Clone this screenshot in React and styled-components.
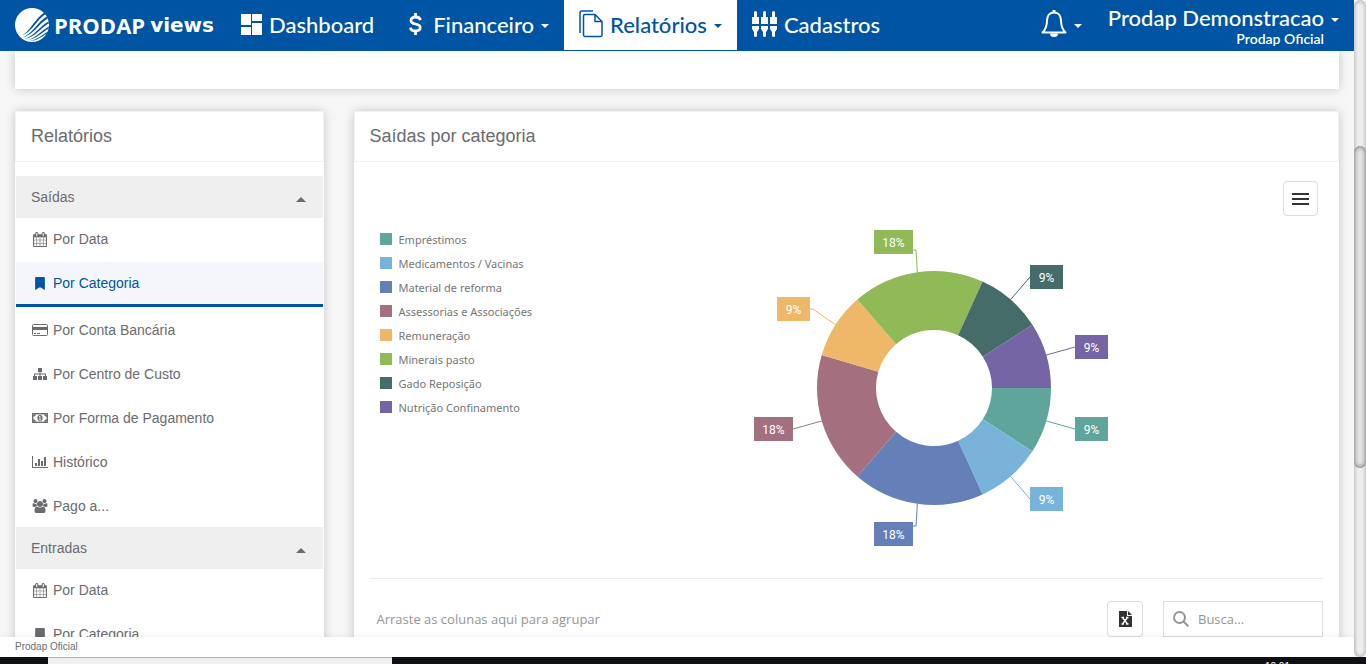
import styled, { createGlobalStyle } from "styled-components";
import { FaBookmark } from "react-icons/fa";

const EstiloGlobal = createGlobalStyle`
    * { box-sizing: border-box; }

    body {
        margin: 0;
        background: #F7F7F7;
        color: #6A6C6F;
        font-family: "Liberation Sans", Arial, sans-serif;
        font-size: 14px;
        overflow: hidden;
    }

    ul, h1, h2, h3, p { margin: 0; padding: 0; }
    ul { list-style: none; }
    a { color: inherit; text-decoration: none; }
    button, input { font-family: inherit; }
`;

const Janela = styled.div`
    display: flex;
    flex-direction: column;
    height: 100vh;
`;

const Aplicacao = styled.div`
    display: flex;
    flex: 1;
    min-height: 0;
`;

const Pagina = styled.div`
    display: flex;
    flex-direction: column;
    flex: 1;
    min-width: 0;
`;

const Cabecalho = styled.header`
    display: flex;
    align-items: flex-start;
    flex: none;
    height: 51px;
    padding-left: 15px;
    background: #0054A4;
    border-bottom: 1px solid #0054A4;
    color: #FFF;
    font-family: Lato, "Open Sans", sans-serif;
`;

const Marca = styled.a`
    display: flex;
    align-items: center;
    gap: 5px;
    height: 50px;
    width: 211px;
`;

const MarcaNome = styled.span`
    font-family: "Open Sans", sans-serif;
    font-weight: 700;
    font-size: 22px;
`;

const MarcaProduto = styled.span`
    font-family: "DejaVu Sans", sans-serif;
    font-weight: 700;
    font-size: 20px;
`;

const Menu = styled.nav`
    display: flex;
    flex: 1;
`;

const MenuItem = styled.a`
    display: flex;
    align-items: center;
    gap: 7px;
    height: 50px;
    padding: 0 15px 2px;
    font-size: 22px;
    font-weight: 500;
    white-space: nowrap;
    color: ${({ $ativo }) => ($ativo ? "#0054A4" : "#FFF")};
    background: ${({ $ativo }) => ($ativo ? "#FFF" : "transparent")};
`;

const Seta = styled.span`
    flex: none;
    margin-top: 4px;
    border: 4px solid transparent;
    border-bottom-width: 0;
    border-top-color: currentColor;
`;

const SetaGrupo = styled.span`
    flex: none;
    margin-top: 4px;
    border: 5px solid transparent;
    border-top-width: 0;
    border-bottom-color: currentColor;
`;

const Notificacoes = styled.button`
    display: flex;
    align-items: center;
    gap: 7px;
    height: 50px;
    padding: 0 0 2px;
    border: 0;
    background: none;
    color: #FFF;
`;

const Usuario = styled.button`
    display: grid;
    grid-template-columns: auto 8px;
    align-items: center;
    column-gap: 7px;
    margin: 0 15px 0 26px;
    padding: 6px 0 0;
    border: 0;
    background: none;
    color: #FFF;
    text-align: right;
`;

const UsuarioNome = styled.span`
    font-size: 22px;
    font-weight: 500;
    line-height: 24px;
`;

const UsuarioEmpresa = styled.span`
    font-size: 14px;
    font-weight: 600;
    line-height: 18px;
`;

const Conteudo = styled.main`
    flex: 1;
    min-height: 0;
    overflow: hidden;
`;

const Painel = styled.section`
    background: #FFF;
    box-shadow: 0 0 10px rgba(0, 0, 0, 0.2);
`;

const PainelFiltro = styled(Painel)`
    height: 38px;
    margin: 0 15px 22px;
`;

const Colunas = styled.div`
    display: flex;
`;

const ColunaLateral = styled.aside`
    width: 25%;
    padding: 0 15px;
`;

const ColunaPrincipal = styled.div`
    width: 75%;
    padding: 0 15px;
`;

const PainelTitulo = styled.h2`
    height: 51px;
    padding: 0 15px;
    border: 1px solid #F2F2F2;
    font-size: 18px;
    font-weight: 400;
    line-height: 49px;
`;

const Grupos = styled.div`
    padding: 14px 1px 0;
`;

const GrupoTitulo = styled.h3`
    display: flex;
    align-items: center;
    justify-content: space-between;
    height: 42px;
    padding: 0 17px 0 15px;
    background: #EFEFEF;
    font-size: 14px;
    font-weight: 400;
`;

const Lista = styled.ul`
    display: flex;
    flex-direction: column;
    gap: 2px;
`;

const Link = styled.a`
    display: flex;
    align-items: center;
    gap: 5px;
    box-sizing: content-box;
    height: 42px;
    padding: 0 16px;
    color: ${({ $ativo }) => ($ativo ? "#0054A4" : "inherit")};
    background: ${({ $ativo }) => ($ativo ? "#F4F6FB" : "transparent")};
    border-bottom: ${({ $ativo }) => ($ativo ? "3px solid #0054A4" : "0")};

    svg {
        flex: none;
        width: 16px;
    }
`;

const Corpo = styled.div`
    padding: 19px 16px 0;
`;

const Acoes = styled.div`
    display: flex;
    justify-content: flex-end;
    padding-right: 5px;
`;

const Botao = styled.button`
    display: flex;
    align-items: center;
    justify-content: center;
    width: ${({ $lado }) => $lado}px;
    height: ${({ $lado }) => $lado}px;
    padding: 0;
    border: 1px solid #DDD;
    border-radius: 4px;
    background: #FFF;
    color: #333;
`;

const GraficoArea = styled.div`
    display: flex;
    padding-bottom: 18px;
    border-bottom: 1px solid #EBEBEB;
    font-family: "Noto Sans", "Open Sans", sans-serif;
`;

const Legenda = styled.ul`
    flex: none;
    width: 175px;
    padding: 11px 0 0 10px;
`;

const LegendaItem = styled.li`
    display: flex;
    align-items: center;
    gap: 7px;
    height: 24px;
    font-size: 11px;
    color: #767676;
    white-space: nowrap;
`;

const LegendaCor = styled.span`
    width: 12px;
    height: 12px;
    background: ${({ $cor }) => $cor};
`;

const Rosca = styled.div`
    display: flex;
    flex: 1;
    justify-content: center;
`;

const Rotulo = styled.text`
    fill: #FFF;
    font-family: Roboto, sans-serif;
    font-size: 12px;
    text-anchor: middle;
`;

const Ferramentas = styled.div`
    display: flex;
    align-items: center;
    gap: 20px;
    padding: 22px 0 24px 7px;
    color: #959595;
    font-family: "Open Sans", "Noto Sans", sans-serif;
`;

const Dica = styled.p`
    flex: 1;
    font-size: 13px;
`;

const Busca = styled.label`
    display: flex;
    align-items: center;
    gap: 9px;
    width: 160px;
    height: 36px;
    padding: 0 9px;
    border: 1px solid #DDD;
`;

const BuscaCampo = styled.input`
    flex: 1;
    min-width: 0;
    padding: 0;
    border: 0;
    outline: 0;
    font-size: 13px;

    &::placeholder {
        color: #959595;
    }
`;

const Rodape = styled.footer`
    flex: none;
    height: 20px;
    padding-left: 15px;
    background: #FFF;
    box-shadow: 0 0 6px rgba(0, 0, 0, 0.08);
    font-size: 10px;
    line-height: 19px;
    z-index: 1;
`;

const Rolagem = styled.div`
    flex: none;
    width: 12px;
    padding-top: 146px;
    border-radius: 6px;
    background: #EEE;
    box-shadow: inset 0 0 4px rgba(0, 0, 0, 0.35);
`;

const RolagemMarcador = styled.div`
    height: 322px;
    border-radius: 6px;
    background: #E4E4E4;
    box-shadow: inset 0 0 5px rgba(0, 0, 0, 0.6);
`;

const BarraTarefas = styled.div`
    display: flex;
    justify-content: space-between;
    flex: none;
    height: 7px;
    padding: 0 76px 0 48px;
    overflow: hidden;
    background: #101118;
    color: #FFF;
`;

const BarraBusca = styled.div`
    width: 344px;
    height: 7px;
    background: #F1F1F1;
    border-top: 1px solid #B8B8B8;
`;

const Relogio = styled.time`
    padding-top: 4px;
    font-size: 10px;
    line-height: 12px;
`;

const IconeLogo = () => (
    <svg width="34" height="34" viewBox="0 0 34 34" aria-hidden="true">
        <circle cx="17" cy="17" r="17" fill="#FFF" />
        <g fill="#0054A4">
            <path d="M5 28C15 25 19 11 29.500 4.500L30.800 6C21 12 17 25 5 28z" />
            <path d="M7 29.500C18 26 22 14 32 8.500L33 10.200C23 16 19 27 7 29.500z" />
            <path d="M9 31C20 28 24 18.500 33.500 13.500L34 15.200C25 20 21 29 9 31z" />
            <path d="M11 32.200C22 30 26 22.500 34 18.500L33.700 20.400C27 24 22 31 11 32.200z" />
            <path d="M13.500 33.300C22 32 27 27 33 23.500L32.300 25.300C27 28.500 22 33 13.500 33.300z" />
        </g>
    </svg>
);

const IconePainel = () => (
    <svg width="21" height="21" viewBox="0 0 21 21" fill="currentColor" aria-hidden="true">
        <path d="M0 0h10v11H0zM0 13h10v8H0zM11 0h10v7H11zM11 9h10v12H11z" />
    </svg>
);

const IconeCifrao = () => (
    <svg width="22" height="22" viewBox="-5 0 22 22" fill="none" stroke="currentColor" strokeWidth="2.800" aria-hidden="true">
        <path d="M6.500 0v4M6.500 18v4M11.300 7.200C11 5 9 4 6.500 4S2 5.200 2 7.500s2 3 4.500 3.500 4.700 1.300 4.700 3.600S9 18 6.500 18 1.800 17 1.500 14.600" />
    </svg>
);

const IconePaginas = () => (
    <svg width="24" height="28" viewBox="0 0 24 28" fill="none" stroke="currentColor" strokeWidth="1.500" aria-hidden="true">
        <path d="M14 1H3a2 2 0 0 0-2 2v20" />
        <path d="M16 4.500H6a1.500 1.500 0 0 0-1.500 1.500v19A1.500 1.500 0 0 0 6 26.500h15.500a1.500 1.500 0 0 0 1.500-1.500V11.500zM16 4.500v7h7" />
    </svg>
);

const IconeCerca = () => (
    <svg width="25" height="26" viewBox="0 0 25 26" fill="currentColor" aria-hidden="true">
        {[0, 9, 18].map(x => (
            <path key={x} d={`M${x + 2} 1.500a1.500 1.500 0 0 1 3 0V6h2v7H${x}V6h2zM${x} 15h7v3l-2 3v3.500a1.500 1.500 0 0 1-3 0V21l-2-3z`} />
        ))}
    </svg>
);

const IconeSino = () => (
    <svg width="26" height="28" viewBox="0 0 26 28" fill="none" stroke="currentColor" strokeWidth="2" strokeLinejoin="round" aria-hidden="true">
        <path d="M13 2.500c-5 0-7 4-7 8 0 6-1.500 9-4.500 12h23c-3-3-4.500-6-4.500-12 0-4-2-8-7-8z" />
        <path d="M9 23.500a4 3.500 0 0 0 8 0z" fill="currentColor" stroke="none" />
        <path d="M13 0v2.500" strokeWidth="3" />
    </svg>
);

const IconeCalendario = () => (
    <svg height="15" viewBox="0 0 1792 1792" fill="currentColor" aria-hidden="true">
        <path d="M192 1664h288v-288h-288v288zm352 0h320v-288h-320v288zm-352-352h288v-320h-288v320zm352 0h320v-320h-320v320zm-352-384h288v-288h-288v288zm736 736h320v-288h-320v288zm-384-736h320v-288h-320v288zm768 736h288v-288h-288v288zm-384-352h320v-320h-320v320zm-352-864v-288q0-13-9.500-22.500t-22.500-9.500h-64q-13 0-22.500 9.500t-9.500 22.500v288q0 13 9.500 22.500t22.500 9.500h64q13 0 22.500-9.500t9.500-22.500zm736 864h288v-320h-288v320zm-384-384h320v-288h-320v288zm384 0h288v-288h-288v288zm32-480v-288q0-13-9.500-22.500t-22.500-9.500h-64q-13 0-22.500 9.500t-9.500 22.500v288q0 13 9.500 22.500t22.500 9.500h64q13 0 22.500-9.500t9.500-22.500zm384-64v1280q0 52-38 90t-90 38h-1408q-52 0-90-38t-38-90v-1280q0-52 38-90t90-38h128v-96q0-66 47-113t113-47h64q66 0 113 47t47 113v96h384v-96q0-66 47-113t113-47h64q66 0 113 47t47 113v96h128q52 0 90 38t38 90z" />
    </svg>
);

const IconeCartao = () => (
    <svg height="12" viewBox="0 0 16 12" fill="none" stroke="currentColor" aria-hidden="true">
        <rect x=".5" y=".5" width="15" height="11" rx="1" />
        <path d="M1 4.500h14" strokeWidth="3" />
        <path d="M2 9.500h2M5 9.500h3" />
    </svg>
);

const IconeOrganograma = () => (
    <svg height="12" viewBox="0 0 16 12" fill="currentColor" aria-hidden="true">
        <path d="M6 0h4v4H8.500v1.500H14V8h1v4h-4V8h2V6.500H8.500V8H10v4H6V8h1.500V6.500H3V8h2v4H1V8h1V5.500h5.500V4H6z" />
    </svg>
);

const IconeDinheiro = () => (
    <svg height="10" viewBox="0 0 16 10" fill="none" stroke="currentColor" strokeWidth="1.400" aria-hidden="true">
        <rect x=".7" y=".7" width="14.600" height="8.600" />
        <path d="M1 3a2 2 0 0 0 2-2M13 1a2 2 0 0 0 2 2M1 7a2 2 0 0 1 2 2M13 9a2 2 0 0 1 2-2" />
        <ellipse cx="8" cy="5" rx="2.600" ry="3" fill="currentColor" stroke="none" />
        <path d="M7 4l1-.8v3.500M7 6.700h2" stroke="#FFF" strokeWidth=".8" />
    </svg>
);

const IconeBarras = () => (
    <svg height="12" viewBox="0 0 16 12" fill="currentColor" aria-hidden="true">
        <path d="M0 0h1v11h15v1H0zM3 7h2v3H3zM6 3h2v7H6zM9 5h2v5H9zM12 1h2v9h-2z" />
    </svg>
);

const IconePessoas = () => (
    <svg height="14" viewBox="64 0 1920 1792" fill="currentColor" aria-hidden="true">
        <path d="M657 896q-162 5-265 128h-134q-82 0-138-40.500t-56-118.500q0-353 124-353 6 0 43.500 21t97.500 42.500 119 21.500q67 0 133-23-5 37-5 66 0 139 81 256zm1071 637q0 120-73 189.500t-194 69.500h-874q-121 0-194-69.500t-73-189.500q0-53 3.500-103.500t14-109 26.500-108.500 43-97.500 62-81 85.500-53.500 111.500-20q10 0 43 21.500t73 48 107 48 135 21.500 135-21.500 107-48 73-48 43-21.500q61 0 111.500 20t85.500 53.500 62 81 43 97.500 26.500 108.500 14 109 3.500 103.500zm-1024-1277q0 106-75 181t-181 75-181-75-75-181 75-181 181-75 181 75 75 181zm704 384q0 159-112.500 271.500t-271.500 112.500-271.500-112.500-112.500-271.500 112.500-271.500 271.500-112.500 271.500 112.500 112.500 271.500zm576 225q0 78-56 118.500t-138 40.500h-134q-103-123-265-128 81-117 81-256 0-29-5-66 66 23 133 23 59 0 119-21.500t97.500-42.500 43.500-21q124 0 124 353zm-128-609q0 106-75 181t-181 75-181-75-75-181 75-181 181-75 181 75 75 181z" />
    </svg>
);

const IconeExcel = () => (
    <svg width="13" height="16" viewBox="0 0 13 16" aria-hidden="true">
        <path d="M0 0h8v5h5v11H0zM9 0l4 4H9z" fill="currentColor" />
        <path d="M3.500 6.500l5 6.500M8.500 6.500l-5 6.500M2.500 6.500h2.500M7 6.500h2.500M2.500 13h2.500M7 13h2.500" stroke="#FFF" strokeWidth="1.400" />
    </svg>
);

const IconeLupa = () => (
    <svg width="16" height="16" viewBox="0 0 16 16" fill="none" stroke="currentColor" strokeWidth="2" aria-hidden="true">
        <circle cx="6.500" cy="6.500" r="5.500" />
        <path d="M10.500 10.500l4.800 4.800" />
    </svg>
);

const IconeMenu = () => (
    <svg width="17" height="12" viewBox="0 0 17 12" fill="currentColor" aria-hidden="true">
        <path d="M0 0h17v2H0zM0 5h17v2H0zM0 10h17v2H0z" />
    </svg>
);

const itensSaidas = [
    { nome: "Por Data", icone: <IconeCalendario /> },
    { nome: "Por Categoria", icone: <FaBookmark size={13} />, ativo: true },
    { nome: "Por Conta Bancária", icone: <IconeCartao /> },
    { nome: "Por Centro de Custo", icone: <IconeOrganograma /> },
    { nome: "Por Forma de Pagamento", icone: <IconeDinheiro /> },
    { nome: "Histórico", icone: <IconeBarras /> },
    { nome: "Pago a...", icone: <IconePessoas /> },
];

const itensEntradas = [
    { nome: "Por Data", icone: <IconeCalendario /> },
    { nome: "Por Categoria", icone: <FaBookmark size={13} /> },
];

// x e y: canto da etiqueta em relação ao centro da rosca
const categorias = [
    { nome: "Empréstimos", cor: "#5FA59C", partes: 1, x: 141, y: 29 },
    { nome: "Medicamentos / Vacinas", cor: "#78B4D9", partes: 1, x: 96, y: 99 },
    { nome: "Material de reforma", cor: "#6580B9", partes: 2, x: -60, y: 134 },
    { nome: "Assessorias e Associações", cor: "#A4707F", partes: 2, x: -180, y: 29 },
    { nome: "Remuneração", cor: "#EEB868", partes: 1, x: -157, y: -91 },
    { nome: "Minerais pasto", cor: "#90BA58", partes: 2, x: -60, y: -158 },
    { nome: "Gado Reposição", cor: "#456C68", partes: 1, x: 96, y: -123 },
    { nome: "Nutrição Confinamento", cor: "#7565A4", partes: 1, x: 141, y: -53 },
];

const RAIO = 117;
const RAIO_INTERNO = 58;

function ponto(raio, angulo) {
    return `${(raio * Math.cos(angulo)).toFixed(2)} ${(raio * Math.sin(angulo)).toFixed(2)}`;
}

function GraficoRosca() {
    const total = categorias.reduce((soma, c) => soma + c.partes, 0);
    let inicio = 0;

    return (
        <svg width="380" height="344" viewBox="-190 -172 380 344" role="img" aria-label="Saídas por categoria">
            {categorias.map(({ nome, cor, partes, x, y }) => {
                const fim = inicio + (partes / total) * 2 * Math.PI;
                const meio = (inicio + fim) / 2;
                const fatia = `M${ponto(RAIO, inicio)}A${RAIO} ${RAIO} 0 0 1 ${ponto(RAIO, fim)}L${ponto(RAIO_INTERNO, fim)}A${RAIO_INTERNO} ${RAIO_INTERNO} 0 0 0 ${ponto(RAIO_INTERNO, inicio)}z`;
                const largura = partes > 1 ? 39 : 33;
                const lado = x < 0 ? x + largura : x;
                const altura = Math.abs(y) > 130 ? y + (y < 0 ? 20 : 4) : y + 12;
                const dobra = x < 0 && y !== 29 ? lado + 3 : lado;
                inicio = fim;

                return (
                    <g key={nome}>
                        <path d={fatia} fill={cor} />
                        <path d={`M${lado} ${altura}H${dobra}L${ponto(RAIO, meio)}`} fill="none" stroke={cor} />
                        <rect x={x} y={y} width={largura} height="24" fill={cor} />
                        <Rotulo x={x + largura / 2} y={y + 17}>{partes > 1 ? "18%" : "9%"}</Rotulo>
                    </g>
                );
            })}
        </svg>
    );
}

function GrupoRelatorios({ titulo, itens }) {
    return (
        <>
            <GrupoTitulo>{titulo}<SetaGrupo /></GrupoTitulo>
            <Lista>
                {itens.map(item => (
                    <li key={item.nome}>
                        <Link href="#" $ativo={item.ativo}>{item.icone}{item.nome}</Link>
                    </li>
                ))}
            </Lista>
        </>
    );
}

function App() {
    return (
        <Janela>
            <EstiloGlobal />
            <Aplicacao>
                <Pagina>
                    <Cabecalho>
                        <Marca href="#">
                            <IconeLogo />
                            <MarcaNome>PRODAP</MarcaNome>
                            <MarcaProduto>views</MarcaProduto>
                        </Marca>
                        <Menu>
                            <MenuItem href="#"><IconePainel />Dashboard</MenuItem>
                            <MenuItem href="#"><IconeCifrao />Financeiro<Seta /></MenuItem>
                            <MenuItem href="#" $ativo><IconePaginas />Relatórios<Seta /></MenuItem>
                            <MenuItem href="#"><IconeCerca />Cadastros</MenuItem>
                        </Menu>
                        <Notificacoes aria-label="Notificações"><IconeSino /><Seta /></Notificacoes>
                        <Usuario>
                            <UsuarioNome>Prodap Demonstracao</UsuarioNome>
                            <Seta />
                            <UsuarioEmpresa>Prodap Oficial</UsuarioEmpresa>
                        </Usuario>
                    </Cabecalho>
                    <Conteudo>
                        <PainelFiltro />
                        <Colunas>
                            <ColunaLateral>
                                <Painel>
                                    <PainelTitulo>Relatórios</PainelTitulo>
                                    <Grupos>
                                        <GrupoRelatorios titulo="Saídas" itens={itensSaidas} />
                                        <GrupoRelatorios titulo="Entradas" itens={itensEntradas} />
                                    </Grupos>
                                </Painel>
                            </ColunaLateral>
                            <ColunaPrincipal>
                                <Painel>
                                    <PainelTitulo>Saídas por categoria</PainelTitulo>
                                    <Corpo>
                                        <Acoes>
                                            <Botao $lado={35} aria-label="Menu do gráfico"><IconeMenu /></Botao>
                                        </Acoes>
                                        <GraficoArea>
                                            <Legenda>
                                                {categorias.map(({ nome, cor }) => (
                                                    <LegendaItem key={nome}><LegendaCor $cor={cor} />{nome}</LegendaItem>
                                                ))}
                                            </Legenda>
                                            <Rosca><GraficoRosca /></Rosca>
                                        </GraficoArea>
                                        <Ferramentas>
                                            <Dica>Arraste as colunas aqui para agrupar</Dica>
                                            <Botao $lado={36} aria-label="Exportar para Excel"><IconeExcel /></Botao>
                                            <Busca>
                                                <IconeLupa />
                                                <BuscaCampo type="text" placeholder="Busca..." aria-label="Busca" />
                                            </Busca>
                                        </Ferramentas>
                                    </Corpo>
                                </Painel>
                            </ColunaPrincipal>
                        </Colunas>
                    </Conteudo>
                    <Rodape>Prodap Oficial</Rodape>
                </Pagina>
                <Rolagem><RolagemMarcador /></Rolagem>
            </Aplicacao>
            <BarraTarefas>
                <BarraBusca />
                <Relogio>10:01</Relogio>
            </BarraTarefas>
        </Janela>
    );
}

export default App;
